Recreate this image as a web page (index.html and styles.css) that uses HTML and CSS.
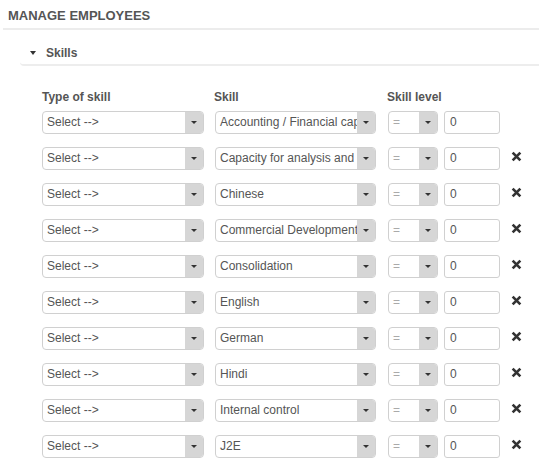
FILE: index.html
```html
<!DOCTYPE html>
<html>
<head>
<meta charset="utf-8">
<link rel="stylesheet" href="styles.css">
</head>
<body>
<div class="page">
  <h1 class="title">MANAGE EMPLOYEES</h1>
  <div class="section">
    <div class="section-head"><span class="caret"></span><span class="section-name">Skills</span></div>
    <div class="table">
      <div class="row head">
        <div class="c-type">Type of skill</div>
        <div class="c-skill">Skill</div>
        <div class="c-level">Skill level</div>
      </div>
      <div class="row">
        <div class="sel c-type"><span class="val">Select --&gt;</span><span class="arr"></span></div>
        <div class="sel c-skill"><span class="val">Accounting / Financial capacity</span><span class="arr"></span></div>
        <div class="sel c-op"><span class="val op">=</span><span class="arr"></span></div>
        <div class="inp">0</div>
        <div class="del"></div>
      </div>
      <div class="row">
        <div class="sel c-type"><span class="val">Select --&gt;</span><span class="arr"></span></div>
        <div class="sel c-skill"><span class="val">Capacity for analysis and synthesis</span><span class="arr"></span></div>
        <div class="sel c-op"><span class="val op">=</span><span class="arr"></span></div>
        <div class="inp">0</div>
        <div class="del"><svg viewBox="0 0 10 10" width="11" height="11"><path d="M1.5 1.5 L8.5 8.5 M8.5 1.5 L1.5 8.5" stroke="#333" stroke-width="2.4"/></svg></div>
      </div>
      <div class="row">
        <div class="sel c-type"><span class="val">Select --&gt;</span><span class="arr"></span></div>
        <div class="sel c-skill"><span class="val">Chinese</span><span class="arr"></span></div>
        <div class="sel c-op"><span class="val op">=</span><span class="arr"></span></div>
        <div class="inp">0</div>
        <div class="del"><svg viewBox="0 0 10 10" width="11" height="11"><path d="M1.5 1.5 L8.5 8.5 M8.5 1.5 L1.5 8.5" stroke="#333" stroke-width="2.4"/></svg></div>
      </div>
      <div class="row">
        <div class="sel c-type"><span class="val">Select --&gt;</span><span class="arr"></span></div>
        <div class="sel c-skill"><span class="val">Commercial Development</span><span class="arr"></span></div>
        <div class="sel c-op"><span class="val op">=</span><span class="arr"></span></div>
        <div class="inp">0</div>
        <div class="del"><svg viewBox="0 0 10 10" width="11" height="11"><path d="M1.5 1.5 L8.5 8.5 M8.5 1.5 L1.5 8.5" stroke="#333" stroke-width="2.4"/></svg></div>
      </div>
      <div class="row">
        <div class="sel c-type"><span class="val">Select --&gt;</span><span class="arr"></span></div>
        <div class="sel c-skill"><span class="val">Consolidation</span><span class="arr"></span></div>
        <div class="sel c-op"><span class="val op">=</span><span class="arr"></span></div>
        <div class="inp">0</div>
        <div class="del"><svg viewBox="0 0 10 10" width="11" height="11"><path d="M1.5 1.5 L8.5 8.5 M8.5 1.5 L1.5 8.5" stroke="#333" stroke-width="2.4"/></svg></div>
      </div>
      <div class="row">
        <div class="sel c-type"><span class="val">Select --&gt;</span><span class="arr"></span></div>
        <div class="sel c-skill"><span class="val">English</span><span class="arr"></span></div>
        <div class="sel c-op"><span class="val op">=</span><span class="arr"></span></div>
        <div class="inp">0</div>
        <div class="del"><svg viewBox="0 0 10 10" width="11" height="11"><path d="M1.5 1.5 L8.5 8.5 M8.5 1.5 L1.5 8.5" stroke="#333" stroke-width="2.4"/></svg></div>
      </div>
      <div class="row">
        <div class="sel c-type"><span class="val">Select --&gt;</span><span class="arr"></span></div>
        <div class="sel c-skill"><span class="val">German</span><span class="arr"></span></div>
        <div class="sel c-op"><span class="val op">=</span><span class="arr"></span></div>
        <div class="inp">0</div>
        <div class="del"><svg viewBox="0 0 10 10" width="11" height="11"><path d="M1.5 1.5 L8.5 8.5 M8.5 1.5 L1.5 8.5" stroke="#333" stroke-width="2.4"/></svg></div>
      </div>
      <div class="row">
        <div class="sel c-type"><span class="val">Select --&gt;</span><span class="arr"></span></div>
        <div class="sel c-skill"><span class="val">Hindi</span><span class="arr"></span></div>
        <div class="sel c-op"><span class="val op">=</span><span class="arr"></span></div>
        <div class="inp">0</div>
        <div class="del"><svg viewBox="0 0 10 10" width="11" height="11"><path d="M1.5 1.5 L8.5 8.5 M8.5 1.5 L1.5 8.5" stroke="#333" stroke-width="2.4"/></svg></div>
      </div>
      <div class="row">
        <div class="sel c-type"><span class="val">Select --&gt;</span><span class="arr"></span></div>
        <div class="sel c-skill"><span class="val">Internal control</span><span class="arr"></span></div>
        <div class="sel c-op"><span class="val op">=</span><span class="arr"></span></div>
        <div class="inp">0</div>
        <div class="del"><svg viewBox="0 0 10 10" width="11" height="11"><path d="M1.5 1.5 L8.5 8.5 M8.5 1.5 L1.5 8.5" stroke="#333" stroke-width="2.4"/></svg></div>
      </div>
      <div class="row">
        <div class="sel c-type"><span class="val">Select --&gt;</span><span class="arr"></span></div>
        <div class="sel c-skill"><span class="val">J2E</span><span class="arr"></span></div>
        <div class="sel c-op"><span class="val op">=</span><span class="arr"></span></div>
        <div class="inp">0</div>
        <div class="del"><svg viewBox="0 0 10 10" width="11" height="11"><path d="M1.5 1.5 L8.5 8.5 M8.5 1.5 L1.5 8.5" stroke="#333" stroke-width="2.4"/></svg></div>
      </div>
    </div>
  </div>
</div>
</body>
</html>
```

FILE: styles.css
```css
html, body {
  margin: 0;
  padding: 0;
  background: #fff;
}
body {
  font-family: "Liberation Sans", Arial, sans-serif;
  font-size: 12px;
  color: #555;
  overflow: hidden;
}
.page {
  padding-top: 7px;
}
.title {
  margin: 0 0 0 3px;
  padding: 0 0 4px 5px;
  font-size: 13px;
  line-height: 17px;
  font-weight: bold;
  color: #555;
  border-bottom: 2px solid #ececec;
}
.section {
  margin-left: 20px;
}
.section-head {
  box-sizing: border-box;
  display: flex;
  align-items: center;
  height: 36px;
  padding: 11px 0 0 10px;
  border-bottom: 2px solid #ededed;
  border-bottom-left-radius: 4px;
}
.caret {
  width: 0;
  height: 0;
  border-left: 3.5px solid transparent;
  border-right: 3.5px solid transparent;
  border-top: 4px solid #333;
  margin-right: 10px;
}
.section-name {
  font-weight: bold;
  font-size: 12px;
  color: #555;
}
.table {
  padding: 24px 0 0 22px;
  display: flex;
  flex-direction: column;
  gap: 13px;
}
.row {
  display: flex;
  align-items: center;
  height: 23px;
}
.row.head {
  height: 14px;
  margin-bottom: -6px;
  font-weight: bold;
  color: #555;
  align-items: flex-end;
}
.head .c-type { width: 172px; }
.head .c-skill { width: 173px; }
.head .c-level { width: 80px; }
.c-type {
  width: 162px;
  margin-right: 11px;
}
.c-skill {
  width: 161px;
  margin-right: 12px;
}
.c-op {
  width: 50px;
  margin-right: 6px;
}
.head .c-type, .head .c-skill, .head .c-level { margin-right: 0; }
.sel {
  box-sizing: border-box;
  height: 23px;
  display: flex;
  border: 1px solid #d0d0d0;
  border-radius: 4px;
  background: #fff;
  overflow: hidden;
}
.val {
  flex: 1;
  min-width: 0;
  padding-left: 4px;
  line-height: 21px;
  white-space: nowrap;
  overflow: hidden;
  color: #555;
}
.val.op {
  color: #aaa;
}
.arr {
  width: 18px;
  flex: none;
  background: #d6d6d6;
  position: relative;
}
.arr::after {
  content: "";
  position: absolute;
  left: 6px;
  top: 9px;
  border-left: 3px solid transparent;
  border-right: 3px solid transparent;
  border-top: 3.5px solid #333;
}
.inp {
  box-sizing: border-box;
  width: 56px;
  height: 23px;
  border: 1px solid #d0d0d0;
  border-radius: 3px;
  padding-left: 5px;
  line-height: 21px;
  color: #555;
}
.del {
  width: 11px;
  height: 11px;
  margin-left: 11px;
  margin-top: -4px;
  display: flex;
}
```
